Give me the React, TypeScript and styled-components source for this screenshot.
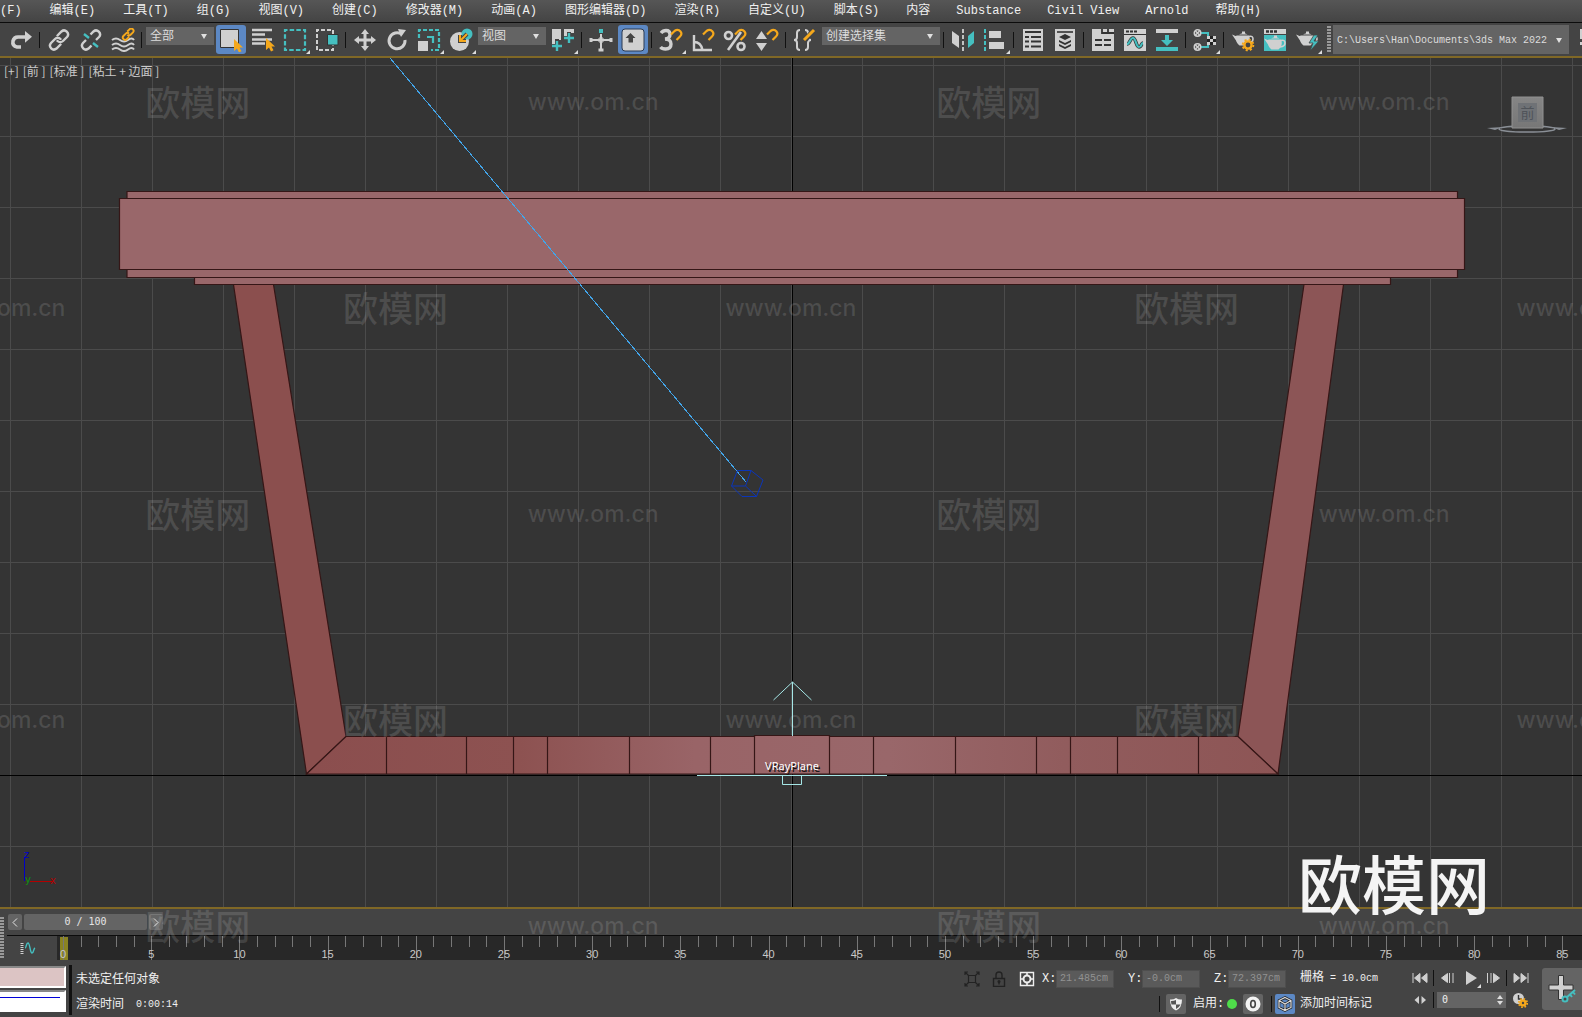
import React, { useState } from 'react';
import styled, { createGlobalStyle, css } from 'styled-components';

const LIGHT = '#d0d0d0';
const TEAL = '#45bfc0';
const ORANGE = '#f5a81c';
const MONO = `'Liberation Mono', 'Noto Sans CJK SC', monospace`;
const SANS = `'Noto Sans CJK SC', sans-serif`;

const GlobalStyle = createGlobalStyle`
  * { box-sizing: border-box; }
  body { margin: 0; background: #444; overflow: hidden; }
  button, input, select { font: inherit; color: inherit; margin: 0; padding: 0; border: 0; }
`;

const Shell = styled.div`
  position: relative;
  display: flex;
  flex-direction: column;
  height: 100vh;
  overflow: hidden;
  background: #444;
  color: #f0f0f0;
  font: 12px/16px ${MONO};
`;

/* ---------- menu ---------- */
const MenuBar = styled.nav`
  display: flex;
  flex: none;
  height: 23px;
  margin-left: -38px;
  border-bottom: 1px solid #0c0c0c;
  background: linear-gradient(#565656, #444);
`;

const MenuItem = styled.button<{ $plain?: boolean }>`
  flex: none;
  padding: 0 ${(p) => (p.$plain ? 13 : 14)}px;
  background: none;
  white-space: nowrap;
`;

/* ---------- toolbar ---------- */
const Toolbar = styled.div`
  display: flex;
  flex: none;
  align-items: center;
  height: 33px;
  margin-left: -27px;
  overflow: hidden;
  background: #444;
`;

const ToolButton = styled.button<{ $on?: boolean }>`
  position: relative;
  display: flex;
  flex: none;
  align-items: center;
  justify-content: center;
  width: 32px;
  height: 33px;
  background: none;
  ${(p) =>
    p.$on &&
    css`
      width: 30px;
      height: 29px;
      margin: 0 1px;
      border-radius: 3px;
      background: #5c88c4;
    `}
`;

const Flyout = styled.span`
  position: absolute;
  right: 1px;
  bottom: 2px;
  border: 2px solid transparent;
  border-right-color: #ddd;
  border-bottom-color: #ddd;
`;

const Divider = styled.span`
  flex: none;
  width: 1px;
  height: 16px;
  margin: 0 3px 0 2px;
  background: #111;
`;

const SelectBox = styled.span<{ $w: number; $path?: boolean }>`
  position: relative;
  flex: none;
  align-self: flex-start;
  width: ${(p) => p.$w}px;
  height: ${(p) => (p.$path ? 29 : 18)}px;
  margin: ${(p) => (p.$path ? '2px 4px 0 2px' : '4px 1px 0')};
  color: #dcdcdc;
  font-size: ${(p) => (p.$path ? 10 : 12)}px;
  select {
    width: 100%;
    height: 100%;
    padding: 2px 4px 0;
    appearance: none;
    background: #646464;
  }
  svg {
    position: absolute;
    top: calc(50% - 3px);
    right: 7px;
    pointer-events: none;
  }
`;

const Grip = styled.span<{ $h: number }>`
  flex: none;
  width: 4px;
  height: ${(p) => p.$h}px;
  margin: 0 0 0 4px;
  background: radial-gradient(circle at 1px 1px, #999 0 1px, transparent 1px) 0 0 / 2px 3px;
`;

/* ---------- viewport ---------- */
const Viewport = styled.main`
  position: relative;
  flex: 1;
  min-height: 0;
  overflow: hidden;
  border: solid #806826;
  border-width: 2px 0;
  background: #343434;
`;

const Scene = styled.svg`
  position: absolute;
  inset: 0;
  width: 100%;
  height: 100%;
`;

const ViewportLabels = styled.div`
  position: absolute;
  top: 5px;
  left: 4px;
  display: flex;
  gap: 4px;
  color: #cacaca;
  font: 12px/16px ${SANS};
  button { background: none; }
`;

const WatermarkLayer = styled.div`
  position: absolute;
  inset: 0;
  overflow: hidden;
  pointer-events: none;
`;

const WatermarkRow = styled.div<{ $shift: boolean }>`
  display: flex;
  align-items: center;
  height: 206px;
  margin-left: ${(p) => (p.$shift ? '-12.5%' : '0')};
  width: ${(p) => (p.$shift ? '125%' : '100%')};
  color: rgba(255, 255, 255, 0.12);
`;

const WatermarkMark = styled.span<{ $url?: boolean }>`
  flex: 1;
  padding-bottom: ${(p) => (p.$url ? 2 : 4)}px;
  text-align: center;
  white-space: nowrap;
  ${(p) => (p.$url ? `font: 500 23px/32px Inter, sans-serif;` : `font: 500 35px/40px ${SANS};`)}
`;

const BrandMark = styled.div`
  position: absolute;
  right: 92px;
  bottom: 100px;
  color: #f4f4f4;
  font: 500 64px/72px ${SANS};
  pointer-events: none;
`;

/* ---------- time line ---------- */
const Timeline = styled.section`
  display: flex;
  flex: none;
`;

const TimelineGrip = styled(Grip)`
  align-self: flex-end;
  margin: 0 3px 2px 0;
`;

const TimelineBody = styled.div`
  flex: 1;
  min-width: 0;
`;

const SliderRow = styled.div`
  display: flex;
  align-items: center;
  gap: 2px;
  height: 26px;
  padding: 0 1px;
`;

const SliderButton = styled.button<{ $wide?: boolean }>`
  display: flex;
  align-items: center;
  justify-content: center;
  width: ${(p) => (p.$wide ? 123 : 14)}px;
  height: 16px;
  border-radius: 2px;
  background: #646464;
  color: #e4e4e4;
  font: 10px/16px 'DejaVu Sans Mono', monospace;
`;

const RulerRow = styled.div`
  display: flex;
  height: 26px;
  border-top: 1px solid #0c0c0c;
`;

const CurveButton = styled.button`
  display: flex;
  align-items: center;
  justify-content: center;
  width: 50px;
  padding: 0 8px 2px 0;
  background: none;
`;

const Ruler = styled.div`
  position: relative;
  display: grid;
  grid-template-columns: repeat(86, 1fr);
  flex: 1;
  height: 24px;
  padding: 0 2px 0 6px;
  background: #282828;
`;

const Tick = styled.span<{ $major: boolean }>`
  position: relative;
  height: ${(p) => (p.$major ? 24 : 11)}px;
  border-left: 1px solid #777;
`;

const TickLabel = styled.span`
  position: absolute;
  top: 10px;
  left: -13px;
  width: 24px;
  color: #c8c8c8;
  font: 11px/16px 'Liberation Sans', sans-serif;
  text-align: center;
`;

const FrameMarker = styled.span`
  position: absolute;
  top: 1px;
  left: 3px;
  width: 8px;
  height: 23px;
  background: #8a8322;
`;

/* ---------- status bar ---------- */
const StatusBar = styled.footer`
  display: flex;
  flex: none;
  height: 56px;
  padding-top: 4px;
`;

const Listener = styled.div`
  display: flex;
  flex-direction: column;
  gap: 2px;
  width: 66px;
  padding-top: 1px;
`;

const ListenerLine = styled.input<{ $pink?: boolean }>`
  width: 66px;
  height: 22px;
  && { border: 2px solid #fff; border-top-color: #888; border-left: 0; }
  background: ${(p) =>
    p.$pink ? '#dcc4c4' : 'linear-gradient(#0000d8, #0000d8) 0 5px / 60px 1px no-repeat #fff'};
`;

const StatusDivider = styled.span`
  width: 3px;
  height: 50px;
  margin: 0 4px 0 3px;
  background: #111;
`;

const Rows = styled.div<{ $grow?: boolean }>`
  display: flex;
  flex-direction: column;
  flex: ${(p) => (p.$grow ? '1' : 'none')};
  padding-top: ${(p) => (p.$grow ? 2 : 1)}px;
  white-space: nowrap;
`;

const Row = styled.div<{ $end?: boolean; $h?: number }>`
  display: flex;
  align-items: center;
  justify-content: ${(p) => (p.$end ? 'flex-end' : 'flex-start')};
  height: ${(p) => p.$h ?? 25}px;
`;

const Small = styled.span`
  margin-left: 12px;
  font-size: 10px;
`;

const Info = styled.span`
  width: 109px;
  white-space: pre;
  span { font-size: 10px; }
`;

const PlainButton = styled.button<{ $w: number }>`
  position: relative;
  display: flex;
  flex: none;
  align-items: center;
  justify-content: center;
  width: ${(p) => p.$w}px;
  height: 24px;
  background: none;
`;

const Field = styled.label`
  display: flex;
  align-items: center;
  width: 72px;
  margin: 0 14px 0 0;
  font-size: 12px;
  span { width: 14px; }
  input {
    width: 58px;
    height: 18px;
    padding-left: 3px;
    border: 1px solid #4e4e4e;
    background: #5a5a5a;
    color: #929292;
    font: 10px/16px ${MONO};
  }
`;

const SquareButton = styled.button<{ $on?: boolean }>`
  display: flex;
  align-items: center;
  justify-content: center;
  width: 20px;
  height: 20px;
  border-radius: 2px;
  background: ${(p) => (p.$on ? '#5c88c4' : '#646464')};
`;

const Enabled = styled.span`
  width: 34px;
  margin-left: 4px;
`;

const Dot = styled.span`
  width: 10px;
  height: 10px;
  margin-right: 6px;
  border-radius: 50%;
  background: #4fdc4a;
`;

const FrameBox = styled.span`
  position: relative;
  width: 69px;
  height: 16px;
  input {
    display: block;
    width: 69px;
    height: 16px;
    padding-left: 5px;
    background: #646464;
    font: 10px/16px 'DejaVu Sans Mono', monospace;
  }
  svg { position: absolute; top: 3px; right: 3px; }
`;

const KeyButton = styled.button`
  display: flex;
  align-items: center;
  justify-content: center;
  width: 40px;
  height: 42px;
  margin: 3px 0 0 8px;
  padding-bottom: 2px;
  border-radius: 3px 0 0 3px;
  background: #646464;
`;

/* ---------- icons ---------- */
const Svg = ({ size = 24, children }: { size?: number; children: React.ReactNode }) => (
  <svg width={size} height={size} viewBox={`0 0 ${size} ${size}`} fill="none" aria-hidden="true">
    {children}
  </svg>
);

const Magnet = () => <path d="M12 6.5 15.5 3Q19 .5 21.5 3.500Q23.500 6 21 8.500L17.500 12" stroke={ORANGE} strokeWidth="2.2" />;
const Cursor = ({ x = 0, y = 0 }) => (
  <path transform={`translate(${x} ${y})`} d="M0 0v12l3-2.500 2 4 2.500-1.300-2-3.700h3.500z" fill={ORANGE} />
);
const Chain = () => (
  <g stroke={LIGHT} strokeWidth="2.4" strokeLinecap="round">
    <path d="m10.500 7.500 4-4a3.900 3.900 0 0 1 5.500 5.500l-4 4a3.900 3.900 0 0 1-5.500 0" />
    <path d="m13.500 16.500-4 4A3.900 3.900 0 0 1 4 15l4-4a3.900 3.900 0 0 1 5.500 0" />
  </g>
);
const Teapot = ({ fill = LIGHT, x = 0, y = 0 }) => (
  <g transform={`translate(${x} ${y})`}>
    <path d="M6 7.500h12c1.500 3 1 7-2.500 10h-7C6.500 16 5.500 14 5 12.500L1 6.500 4.500 8z" fill={fill} />
    <path d="M8 6.500q4.500-2.500 8.500 0zM11 3.500h3v2h-3z" fill={fill} />
    <path d="M18 8.500q4-1 4 2.500t-5 4" stroke={fill} strokeWidth="1.600" />
  </g>
);
const Gear = ({ x, y, r = 4 }: { x: number; y: number; r?: number }) => (
  <g transform={`translate(${x} ${y})`} stroke={ORANGE}>
    <circle r={r} strokeWidth="2.4" fill="#444" />
    <circle r={r + 1.8} strokeWidth="1.8" strokeDasharray={`${(r + 1.8) * 0.39} ${(r + 1.8) * 0.395}`} />
  </g>
);

const icons: Record<string, React.ReactNode> = {
  undo: <path d="M3 8h12q6 0 6 5t-6 5h-3" stroke={LIGHT} strokeWidth="4" />,
  redo: (
    <>
      <path d="M12 19H8q-5-1-4-6 1-4 5-4h8" stroke={LIGHT} strokeWidth="3.6" />
      <path d="m16 3 7 5.800-7 6z" fill={LIGHT} />
    </>
  ),
  link: <Chain />,
  unlink: (
    <>
      <Chain />
      <path d="m5 5 14 14" stroke="#444" strokeWidth="7" />
      <path d="m5 6 5 4m4 5 5 4" stroke={TEAL} strokeWidth="2.400" />
    </>
  ),
  bind: (
    <>
      <path d="M1 12q4-3 8 0t8 0 6 0M1 17q4-3 8 0t8 0 6 0M1 21.500q4-3 8 0t8 0 6 0" stroke={LIGHT} strokeWidth="2" />
      <g transform="translate(10 -1) scale(.6)" stroke={ORANGE} strokeWidth="3.2">
        <path d="m10.500 7.500 4-4a3.900 3.900 0 0 1 5.500 5.500l-4 4a3.900 3.900 0 0 1-5.500 0m3 3.500-4 4A3.900 3.900 0 0 1 4 15l4-4a3.900 3.900 0 0 1 5.500 0" />
      </g>
    </>
  ),
  select: (
    <>
      <path d="M1.500 1.500h18v18h-18z" fill={LIGHT} stroke="#333" />
      <Cursor x={15} y={11} />
    </>
  ),
  byName: (
    <>
      <path d="M1 2h20M1 6.500h13M1 11.500h20M1 15.500h13" stroke={LIGHT} strokeWidth="2.400" />
      <Cursor x={15} y={10} />
    </>
  ),
  region: <path d="M2 2h20v20H2z" stroke={TEAL} strokeWidth="2.200" strokeDasharray="4.500 2.160" strokeDashoffset="2" />,
  crossing: (
    <>
      <path d="M2 2h16v20H2z" stroke={LIGHT} strokeWidth="2" strokeDasharray="4 2" strokeDashoffset="2" />
      <path d="M12.500 6.500H23v10.500H12.500z" fill={TEAL} stroke="#333" />
    </>
  ),
  move: (
    <path d="m12 1 4 5h-2.500v4.500H18V8l5 4-5 4v-2.500h-4.500V18H16l-4 5-4-5h2.500v-4.500H6V16l-5-4 5-4v2.500h4.500V6H8z" fill={LIGHT} />
  ),
  rotate: (
    <>
      <path d="M17 6.500A8 8 0 1 0 20 12" stroke={LIGHT} strokeWidth="3" />
      <path d="m13 1 8 1-5 7z" fill={LIGHT} />
    </>
  ),
  scale: (
    <>
      <path d="M2 10V2h20v20h-8" stroke={TEAL} strokeWidth="2.200" strokeDasharray="4 2" />
      <path d="M1 13h10v10H1z" fill={LIGHT} />
      <path d="M10 9h6v6" stroke={TEAL} strokeWidth="2.200" />
    </>
  ),
  place: (
    <>
      <circle cx="10.500" cy="13.500" r="9.500" fill={LIGHT} />
      <circle cx="18" cy="6" r="5.500" fill={TEAL} />
      <path d="m18 6-6 6m-1-5v6h6" stroke="#444" strokeWidth="4" />
      <path d="m18 6-6 6m-1-5v6h6" stroke={ORANGE} strokeWidth="2" />
    </>
  ),
  pivot: (
    <>
      <path d="M1 1h9v11H6v4H1zM13 1h10v4h-4v7h-6z" fill={LIGHT} />
      <path d="M6 11v12m-6-5h12M18 4v12m-6-6h12" stroke="#444" strokeWidth="4" />
      <path d="M6 13v10m-5-5h10M18 5v10m-5-5h10" stroke={TEAL} strokeWidth="2.400" />
    </>
  ),
  manip: (
    <>
      <path d="M12 6v17M1 12h22" stroke={LIGHT} strokeWidth="2" />
      <path d="M2 10v4m20-4v4M9.500 22h5M9 12h6M12 9v6" stroke={LIGHT} strokeWidth="3" />
      <path d="M10 1h4v4h-4z" fill={TEAL} />
    </>
  ),
  keyboard: (
    <>
      <rect x="1" y="1" width="22" height="22" rx="3" fill={LIGHT} stroke="#2c3a50" />
      <path d="m9.500 5 5 5H12v4.500H7.500V10h-3z" fill="#444" />
    </>
  ),
  snap: (
    <>
      <path d="M2 5q2-2.500 5-2.500 4 0 4 4t-5 4.500q6 0 6 5 0 5-5.500 5-3.500 0-5-2" stroke={LIGHT} strokeWidth="3.400" />
      <Magnet />
    </>
  ),
  angle: (
    <>
      <path d="M3 7v15h18M3 14q7 0 8.500 8" stroke={LIGHT} strokeWidth="2.400" />
      <Magnet />
    </>
  ),
  percent: (
    <>
      <circle cx="5.500" cy="7.500" r="3.500" stroke={LIGHT} strokeWidth="2.600" />
      <circle cx="18" cy="18.500" r="3.500" stroke={LIGHT} strokeWidth="2.600" />
      <path d="M5 22 18 4" stroke={LIGHT} strokeWidth="2.600" />
      <Magnet />
    </>
  ),
  spinner: (
    <>
      <path d="m6.500 3 5.500 8H1zM6.500 23 1 15h11z" fill={LIGHT} />
      <Magnet />
    </>
  ),
  sets: (
    <>
      <path d="M7 2Q4 2 4 5v4q0 3-3 3 3 0 3 3v4q0 3 3 3M12 2q3 0 3 3v4q0 3 3 3-3 0-3 3v4q0 3-3 3" stroke={LIGHT} strokeWidth="2" />
      <path d="M12 12 21 2" stroke="#444" strokeWidth="5" />
      <path d="m11 12 10-10" stroke={ORANGE} strokeWidth="3" />
    </>
  ),
  mirror: (
    <>
      <path d="m1 3 7 5v12l-7-5z" fill={LIGHT} />
      <path d="M12 1v22" stroke={LIGHT} strokeWidth="1.800" strokeDasharray="4 2" />
      <path d="m23 3-6 5v12l6-5z" fill={TEAL} />
    </>
  ),
  align: (
    <>
      <path d="M2 1v22" stroke={TEAL} strokeWidth="2" strokeDasharray="4 2" />
      <path d="M6 3h12v7H6zM6 14h15v7H6z" fill={LIGHT} />
    </>
  ),
  scene: (
    <>
      <path d="M2 1h20v22H2z" fill={LIGHT} />
      <path d="M4 4h16M4 9h4m2 0h10M4 13.500h4m2 0h10M4 18.500h4m2 0h10" stroke="#333" strokeWidth="1.800" />
    </>
  ),
  layers: (
    <>
      <path d="M2 1h20v22H2z" fill={LIGHT} />
      <path d="M4 4h16" stroke="#333" strokeWidth="1.600" />
      <path d="m12 6 6 3-6 3-6-3zM6 12l6 3 6-3v2l-6 3-6-3zM6 16l6 3 6-3v2l-6 3-6-3z" fill="#333" />
    </>
  ),
  ribbon: (
    <>
      <path d="M1 1h22v22H1z" fill={LIGHT} />
      <path d="M11 1v4h12M17 1v4M4 12h7m2 0h7M4 17h7m2 0h7" stroke="#333" strokeWidth="1.800" />
    </>
  ),
  curve: (
    <>
      <path d="M1 1h22v22H1z" fill={LIGHT} />
      <path d="M3 3.500h3m1 0h3m1 0h3" stroke="#333" strokeWidth="2.200" />
      <path d="M1 6.500h22" stroke="#333" />
      <path d="M4 16c3 0 3-6 6-6s3 9 6 9 2-4 4-4" stroke="#333" strokeWidth="3.600" />
      <path d="M4 16c3 0 3-6 6-6s3 9 6 9 2-4 4-4" stroke={TEAL} strokeWidth="2.200" />
    </>
  ),
  schematic: (
    <>
      <path d="M1 1h22v4H1z" fill={LIGHT} />
      <path d="M10 7h4v5h4l-6 6-6-6h4zM1 19h22v4H1z" fill={TEAL} />
    </>
  ),
  material: (
    <>
      <path d="M8 5h7v5M8 19h7v-5" stroke={TEAL} strokeWidth="2" />
      <g fill="#333" stroke={LIGHT} strokeWidth="1.600">
        <circle cx="4.500" cy="5" r="3.200" />
        <circle cx="4.500" cy="19" r="3.200" />
        <path d="m2.500 3 4 4m0-4-4 4m0 10 4 4m0-4-4 4" />
      </g>
      <path d="M14 8h9v9h-9z" fill="#222" />
      <path d="M14 8h3v3h-3zM20 8h3v3h-3zM17 11h3v3h-3zM14 14h3v3h-3zM20 14h3v3h-3z" fill={LIGHT} />
    </>
  ),
  renderSetup: (
    <>
      <Teapot />
      <Gear x={17} y={17} r={3.6} />
    </>
  ),
  frameWindow: (
    <>
      <path d="M1 1h22v5H1z" fill={LIGHT} />
      <path d="M3 3.500h3m1 0h3m1 0h3" stroke="#333" strokeWidth="2.400" />
      <path d="M1 7h22v16H1z" fill={TEAL} />
      <Teapot x={0} y={4} />
    </>
  ),
  render: (
    <>
      <Teapot />
      <path d="m19 7-5 8h4l-3 8 9-10h-5l4-6z" fill={TEAL} stroke="#444" strokeWidth=".8" />
    </>
  ),
  project: <path d="M3 1h5v10H3zM3 14h5v3H3z" fill={LIGHT} />,
};

type Tool = { icon?: string; name?: string; fly?: boolean; on?: boolean; select?: string; w?: number };
const sep: Tool = {};
const t = (icon: string, name: string, fly = false, on = false): Tool => ({ icon, name, fly, on });
const tools: Tool[] = [
  t('undo', '撤消'), t('redo', '重做'), sep,
  t('link', '选择并链接'), t('unlink', '取消链接'), t('bind', '绑定到空间扭曲'), sep,
  { select: '全部', w: 68 },
  t('select', '选择对象', false, true), t('byName', '按名称选择'), t('region', '矩形选择区域', true), t('crossing', '窗口/交叉'), sep,
  t('move', '选择并移动'), t('rotate', '选择并旋转'), t('scale', '选择并缩放', true), t('place', '选择并放置', true),
  { select: '视图', w: 68 },
  t('pivot', '使用轴点中心', true), sep,
  t('manip', '选择并操纵'), t('keyboard', '键盘快捷键覆盖', false, true), sep,
  t('snap', '捕捉开关', true), t('angle', '角度捕捉'), t('percent', '百分比捕捉'), t('spinner', '微调器捕捉'), sep,
  t('sets', '编辑命名选择集'),
  { select: '创建选择集', w: 118 }, sep,
  t('mirror', '镜像'), t('align', '对齐', true), sep,
  t('scene', '场景资源管理器'), t('layers', '层资源管理器'), sep,
  t('ribbon', '功能区'), t('curve', '曲线编辑器'), t('schematic', '图解视图'), sep,
  t('material', '材质编辑器', true), sep,
  t('renderSetup', '渲染设置'), t('frameWindow', '渲染帧窗口'), t('render', '渲染', true),
];

const menus = [
  '文件(F)', '编辑(E)', '工具(T)', '组(G)', '视图(V)', '创建(C)', '修改器(M)', '动画(A)', '图形编辑器(D)',
  '渲染(R)', '自定义(U)', '脚本(S)', '内容', 'Substance', 'Civil View', 'Arnold', '帮助(H)',
];

const DropDown = ({ text, w, path }: { text: string; w: number; path?: boolean }) => (
  <SelectBox $w={w} $path={path}>
    <select aria-label={text} defaultValue={text}>
      <option>{text}</option>
    </select>
    <svg width="6" height="6" viewBox="0 0 6 6" aria-hidden="true">
      <path d="M0 1h6L3 6z" fill="#e0e0e0" />
    </svg>
  </SelectBox>
);

/* ---------- scene drawing ---------- */
const columns = Array.from({ length: 23 }, (_, i) => 11 + i * 71);
const lines = Array.from({ length: 12 }, (_, i) => 65 + i * 71);
const seams = [386, 466, 513, 547, 629, 710, 754, 829, 873, 955, 1036, 1070, 1117, 1198];

const SceneView = () => (
  <Scene viewBox="0 58 1582 849" preserveAspectRatio="xMidYMid slice" aria-label="前视图">
    <defs>
      <linearGradient id="base" x1="306" x2="1278" gradientUnits="userSpaceOnUse">
        <stop offset="0" stopColor="#8b4e4e" />
        <stop offset=".22" stopColor="#8d5251" />
        <stop offset=".4" stopColor="#996467" />
        <stop offset=".6" stopColor="#99676a" />
        <stop offset=".78" stopColor="#915c5d" />
        <stop offset="1" stopColor="#8d5555" />
      </linearGradient>
      <linearGradient id="cube" x2="0" y2="1">
        <stop stopColor="#858585" />
        <stop offset="1" stopColor="#777" />
      </linearGradient>
    </defs>
    <g stroke="#4b4b4b" shapeRendering="crispEdges">
      {columns.map((x) => <path key={x} d={`M${x - 0.5} 58v849`} />)}
      {lines.map((y) => <path key={y} d={`M0 ${y + 0.5}h1582`} />)}
      <path d="M792.500 58v849M0 775.500h1582" stroke="#000" />
    </g>
    <g stroke="#351616" strokeWidth="1.200">
      <path d="M233.500 284.500h40L346 736.500l-39.500 37.500z" fill="#8b4f4e" />
      <path d="M1304 284.500h39.500L1278 774l-40-37.500z" fill="#8c5556" />
      <path d="M346 736.500h408.500v-1h75v1H1238l40 37.500H306.500z" fill="url(#base)" />
      {seams.map((x) => <path key={x} d={`M${x + 0.5} 736v38`} />)}
      <g fill="#99676a">
        <path d="M127 191.500h1330.500v8H127z" />
        <path d="M127 269.500h1330.500v8H127z" />
        <path d="M194.500 277.500h1196v7h-1196z" />
        <path d="M119.500 198.500h1345v71h-1345z" />
      </g>
    </g>
    <path d="m390 58 356 424" stroke="#42a5ea" shapeRendering="crispEdges" />
    <path
      d="M737.500 470.500h13.500l12 9.500-6.500 16.500H742L731.500 486zm13.500 0-5.500 15.500h-14m14 0 11 10.500"
      fill="none"
      stroke="#0b35b8"
    />
    <g fill="none" stroke="#a5e6e6">
      <path d="M792.500 736v-54m-19 18 19-18 19 18" />
      <path d="M697 775.500h190M782.500 775.500v9h19v-9" />
    </g>
    <text x="793.500" y="771.500" textAnchor="middle" fill="#111" fontFamily="Noto Sans, sans-serif" fontSize="11" aria-hidden="true">VRayPlane</text>
    <text x="792" y="770" textAnchor="middle" fill="#fff" fontFamily="Noto Sans, sans-serif" fontSize="11">VRayPlane</text>
    <path d="M24.500 881v-24" stroke="#0000c8" />
    <path d="M30 881.500h22" stroke="#b40000" />
    <g fontFamily="DejaVu Sans, sans-serif" fontSize="10">
      <text x="24" y="858" fill="#0000c8">z</text>
      <text x="25" y="883" fill="#109010">y</text>
      <text x="50" y="884" fill="#b40000">x</text>
    </g>
    <ellipse cx="1527" cy="129" rx="28" ry="3" fill="none" stroke="#8a8f96" strokeWidth="1.500" />
    <path d="m1487 128 16-1-8 3zm80 0-16-1 8 3z" fill="#8a8f96" />
    <path d="M1512 97h31v31h-31z" fill="url(#cube)" stroke="#919191" />
    <path d="M1518 103h19v19h-19z" fill="#6f7276" />
    <text x="1527.500" y="118" textAnchor="middle" fontFamily="Noto Sans CJK SC, sans-serif" fontSize="14" fill="#50545a">前</text>
  </Scene>
);

const Playback = {
  start: <path d="M1 3v10M8 3.500v9L2.500 8zM15 3.500v9L9.500 8z" />,
  prev: <path d="M7.500 3.500v9L1.500 8zM9.500 3v10M13 3v10" />,
  play: <path d="M3 1 14 8 3 15z" />,
  next: <path d="M2.500 3v10M6 3v10M8.500 3.500v9l6-4.500z" />,
  end: <path d="M15 3v10M1 3.500v9L6.500 8zM8 3.500v9l5.500-4.500z" />,
  keys: <path d="M7 4v8L2.500 8zM9.500 4v8L14 8z" />,
};
const PlayIcon = ({ kind }: { kind: keyof typeof Playback }) => (
  <Svg size={16}>
    <g fill={LIGHT} stroke={LIGHT} strokeWidth={kind === 'keys' || kind === 'play' ? 0 : 1}>{Playback[kind]}</g>
  </Svg>
);

const CoordField = ({ axis, value }: { axis: string; value: string }) => {
  const [text, setText] = useState(value);
  return (
    <Field>
      <span>{axis}:</span>
      <input value={text} onChange={(e) => setText(e.target.value)} />
    </Field>
  );
};

export default function App() {
  return (
    <>
      <GlobalStyle />
      <Shell>
        <MenuBar>
          {menus.map((m) => (
            <MenuItem key={m} $plain={!m.includes('(')}>{m}</MenuItem>
          ))}
        </MenuBar>

        <Toolbar>
          {tools.map((tool, i) => {
            if (tool.select) return <DropDown key={i} text={tool.select} w={tool.w ?? 68} />;
            if (!tool.icon) return <Divider key={i} />;
            return (
              <ToolButton key={i} $on={tool.on} aria-label={tool.name}>
                <Svg>{icons[tool.icon]}</Svg>
                {tool.fly && <Flyout />}
              </ToolButton>
            );
          })}
          <Grip $h={27} />
          <DropDown text="C:\Users\Han\Documents\3ds Max 2022" w={236} path />
          <ToolButton aria-label="项目"><Svg>{icons.project}</Svg></ToolButton>
        </Toolbar>

        <Viewport>
          <SceneView />
          <ViewportLabels>
            <button>[+]</button>
            <button>[前 ]</button>
            <button>[标准 ]</button>
            <button>[粘土 + 边面 ]</button>
          </ViewportLabels>
        </Viewport>

        <Timeline>
          <TimelineGrip $h={42} />
          <TimelineBody>
            <SliderRow>
              <SliderButton aria-label="上一帧"><svg width="6" height="9" fill="none" stroke="#e4e4e4"><path d="M5 .5 1 4.500l4 4" /></svg></SliderButton>
              <SliderButton $wide>0 / 100</SliderButton>
              <SliderButton aria-label="下一帧"><svg width="6" height="9" fill="none" stroke="#e4e4e4"><path d="m1 .5 4 4-4 4" /></svg></SliderButton>
            </SliderRow>
            <RulerRow>
              <CurveButton aria-label="打开迷你曲线编辑器">
                <Svg size={16}>
                  <path d="M2 3v11" stroke={LIGHT} strokeWidth="3" strokeDasharray="1 1" />
                  <path d="M5 8c1.500 0 1-5 3-5s2 10 4 10 1-4 3-5" stroke={TEAL} strokeWidth="1.400" />
                </Svg>
              </CurveButton>
              <Ruler>
                <FrameMarker />
                {Array.from({ length: 86 }, (_, f) => (
                  <Tick key={f} $major={f % 5 === 0}>{f % 5 === 0 && <TickLabel>{f}</TickLabel>}</Tick>
                ))}
              </Ruler>
            </RulerRow>
          </TimelineBody>
        </Timeline>

        <StatusBar>
          <Listener>
            <ListenerLine $pink aria-label="宏录制器" />
            <ListenerLine aria-label="侦听器" />
          </Listener>
          <StatusDivider />
          <Rows $grow>
            <Row>未选定任何对象</Row>
            <Row>渲染时间<Small>0:00:14</Small></Row>
          </Rows>

          <Rows>
            <Row $end>
              <PlainButton $w={27} aria-label="孤立当前选择">
                <Svg size={16}>
                  <path d="M4.500 4.500h7v7h-7zM1 4V1h3m8 0h3v3m0 8v3h-3m-8 0H1v-3M1 1l3.500 3.500M15 1l-3.500 3.500M1 15l3.500-3.500M15 15l-3.500-3.500" stroke="#222" strokeWidth="1.200" />
                </Svg>
              </PlainButton>
              <PlainButton $w={27} aria-label="选择锁定">
                <Svg size={16}>
                  <path d="M2.500 7.500h11v8h-11zM5 7V4q0-3 3-3t3 3v3M8 10v3.500" stroke="#222" strokeWidth="1.400" />
                  <circle cx="8" cy="10.500" r="1.500" fill="#222" />
                </Svg>
              </PlainButton>
              <PlainButton $w={30} aria-label="绝对/偏移模式">
                <Svg size={16}>
                  <path d="M1.500 1.500h13v13h-13z" stroke="#eee" strokeWidth="1.400" />
                  <circle cx="8" cy="8" r="3.500" stroke="#eee" strokeWidth="2" />
                  <path d="M8 2v3m0 6v3M2 8h3m6 0h3" stroke="#eee" strokeWidth="1.600" />
                </Svg>
              </PlainButton>
              <CoordField axis="X" value="21.485cm" />
              <CoordField axis="Y" value="-0.0cm" />
              <CoordField axis="Z" value="72.397cm" />
              <Info>栅格<span> = 10.0cm</span></Info>
            </Row>
            <Row $end>
              <Divider />
              <PlainButton $w={26} aria-label="自适应降级">
                <SquareButton as="span">
                  <Svg size={16}>
                    <path d="M8 2q3 2 6 1.500Q14 12 8 14.500 2 12 2 3.500 5 4 8 2z" fill="#eee" />
                    <path d="M8 4v4.500H3.500Q3 6.500 3 5q3 0 5-1zM8 8.500h4.500Q11 12 8 13z" fill="#555" />
                  </Svg>
                </SquareButton>
              </PlainButton>
              <Enabled>启用:</Enabled>
              <Dot />
              <SquareButton aria-label="0">
                <Svg size={16}>
                  <circle cx="8" cy="8" r="7.500" fill="#f2f2f2" />
                  <ellipse cx="8" cy="8" rx="2.300" ry="3.500" stroke="#444" strokeWidth="1.600" />
                </Svg>
              </SquareButton>
              <PlainButton $w={37} aria-label="时间标记">
                <Divider />
                <SquareButton as="span" $on>
                  <Svg size={16}>
                    <path d="m8 1.500 6 3v7l-6 3-6-3v-7zM2 4.500l6 3.500 6-3.500M8 8v6.500" stroke="#222" strokeWidth="2.600" />
                    <path d="m8 1.500 6 3v7l-6 3-6-3v-7zM2 4.500l6 3.500 6-3.500M8 8v6.500" stroke="#ddd" strokeWidth="1.200" />
                  </Svg>
                </SquareButton>
              </PlainButton>
              <Info>添加时间标记</Info>
            </Row>
          </Rows>

          <Rows>
            <Row $h={24}>
              <PlainButton $w={22} aria-label="转至开头"><PlayIcon kind="start" /></PlainButton>
              <Divider />
              <PlainButton $w={22} aria-label="上一帧"><PlayIcon kind="prev" /></PlainButton>
              <PlainButton $w={23} aria-label="播放动画"><PlayIcon kind="play" /><Flyout /></PlainButton>
              <PlainButton $w={22} aria-label="下一帧"><PlayIcon kind="next" /></PlainButton>
              <Divider />
              <PlainButton $w={22} aria-label="转至结尾"><PlayIcon kind="end" /></PlainButton>
            </Row>
            <Row $h={20}>
              <PlainButton $w={22} aria-label="关键点模式"><PlayIcon kind="keys" /></PlainButton>
              <Divider />
              <FrameBox>
                <input aria-label="当前帧" defaultValue="0" />
                <svg width="6" height="10" aria-hidden="true"><path d="M0 4h6L3 0zM0 6h6l-3 4z" fill="#ddd" /></svg>
              </FrameBox>
              <PlainButton $w={28} aria-label="时间配置">
                <Svg size={16}>
                  <circle cx="6.500" cy="6.500" r="5.500" fill={LIGHT} />
                  <path d="M6.500 3v4H10" stroke="#333" strokeWidth="1.400" />
                  <Gear x={11} y={11} r={2.4} />
                </Svg>
              </PlainButton>
            </Row>
          </Rows>
          <KeyButton aria-label="设置关键点">
            <Svg size={30}>
              <path d="M11.500 2.500h5v9.500H26v5h-9.500V26.500h-5v-9.500H2v-5h9.500z" fill={LIGHT} stroke="#333" />
              <path d="m19 25 9-8m-2 2 2 2.500M23 21.500l2 2.500" stroke={TEAL} strokeWidth="2" />
              <circle cx="18" cy="26" r="2.500" stroke={TEAL} strokeWidth="2" fill="#444" />
            </Svg>
          </KeyButton>
        </StatusBar>

        <WatermarkLayer aria-hidden="true">
          {[0, 1, 2, 3, 4].map((r) => (
            <WatermarkRow key={r} $shift={r % 2 === 1}>
              {Array.from({ length: r % 2 ? 5 : 4 }, (_, c) => {
                const url = (r + c) % 2 === 1;
                return <WatermarkMark key={c} $url={url}>{url ? 'www.om.cn' : '欧模网'}</WatermarkMark>;
              })}
            </WatermarkRow>
          ))}
        </WatermarkLayer>
        <BrandMark>欧模网</BrandMark>
      </Shell>
    </>
  );
}
